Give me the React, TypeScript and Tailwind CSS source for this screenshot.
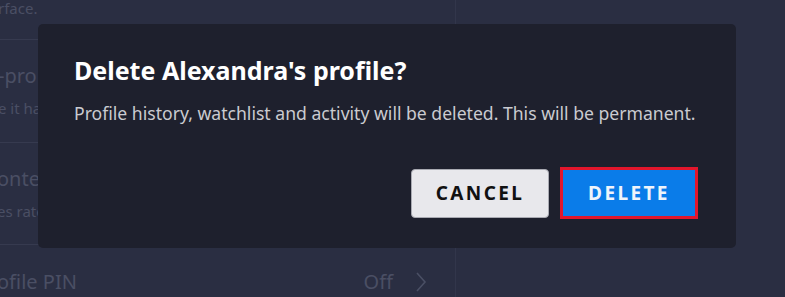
export default function App() {
  return (
    <div
      className="relative w-[785px] h-[297px] overflow-hidden bg-[#2a2e42]"
      style={{ fontFamily: "'Noto Sans', Lato, sans-serif" }}
    >
      {/* page behind the dialog */}
      <div className="flex h-full">
        <div className="w-[456px] flex flex-col text-[#4a4f64] border-r border-[#32364b]">
          <div className="h-[40px] border-b border-[#363a4f] text-[15px] leading-[16px] -ml-[2px]">
            rface.
          </div>
          <div className="h-[103px] border-b border-[#363a4f] pt-[22px] -ml-[2px]">
            <div className="text-[20px] leading-[28px]">-pro</div>
            <div className="mt-[8px] text-[15px] leading-[20px]">e it ha</div>
          </div>
          <div className="h-[102px] border-b border-[#363a4f] pt-[22px] -ml-[3px]">
            <div className="text-[20px] leading-[28px]">onten</div>
            <div className="mt-[8px] text-[15px] leading-[20px]">es rate</div>
          </div>
          <div className="flex-1 flex items-center pt-[22px] -ml-[3px]">
            <div className="flex-1 text-[20px]">ofile PIN</div>
            <span className="text-[20px] mr-[22px]">Off</span>
            <svg width="12" height="20" viewBox="0 0 12 20" className="mr-[28px]">
              <path d="M2 1l8 9-8 9" fill="none" stroke="#4a4f64" strokeWidth="1.6" />
            </svg>
          </div>
        </div>
        <div className="flex-1" />
      </div>

      {/* dialog */}
      <div className="absolute left-[38px] top-[24px] w-[698px] h-[224px] rounded-[5px] bg-[#1e202d] px-[36px] pt-[30px]">
        <h2 className="text-[25px] leading-[32px] font-bold text-white">
          Delete Alexandra's profile?
        </h2>
        <p className="mt-[14px] text-[17.6px] leading-[26px] text-[#cacbd0] whitespace-nowrap">
          Profile history, watchlist and activity will be deleted. This will be permanent.
        </p>
        <div className="mt-[41px] flex justify-end gap-[11px] pr-[2px] items-center">
          <button className="w-[138px] h-[49px] rounded-[4px] bg-[#e8e8ec] border border-[#a9aab2] text-[19px] font-bold tracking-[2.4px] text-[#111]">
            CANCEL
          </button>
          <button className="w-[138px] h-[52px] border-[3px] border-[#e2162c] bg-[#0a7ce9] text-[19px] font-bold tracking-[2.4px] text-[#eef4fb]">
            DELETE
          </button>
        </div>
      </div>
    </div>
  )
}
